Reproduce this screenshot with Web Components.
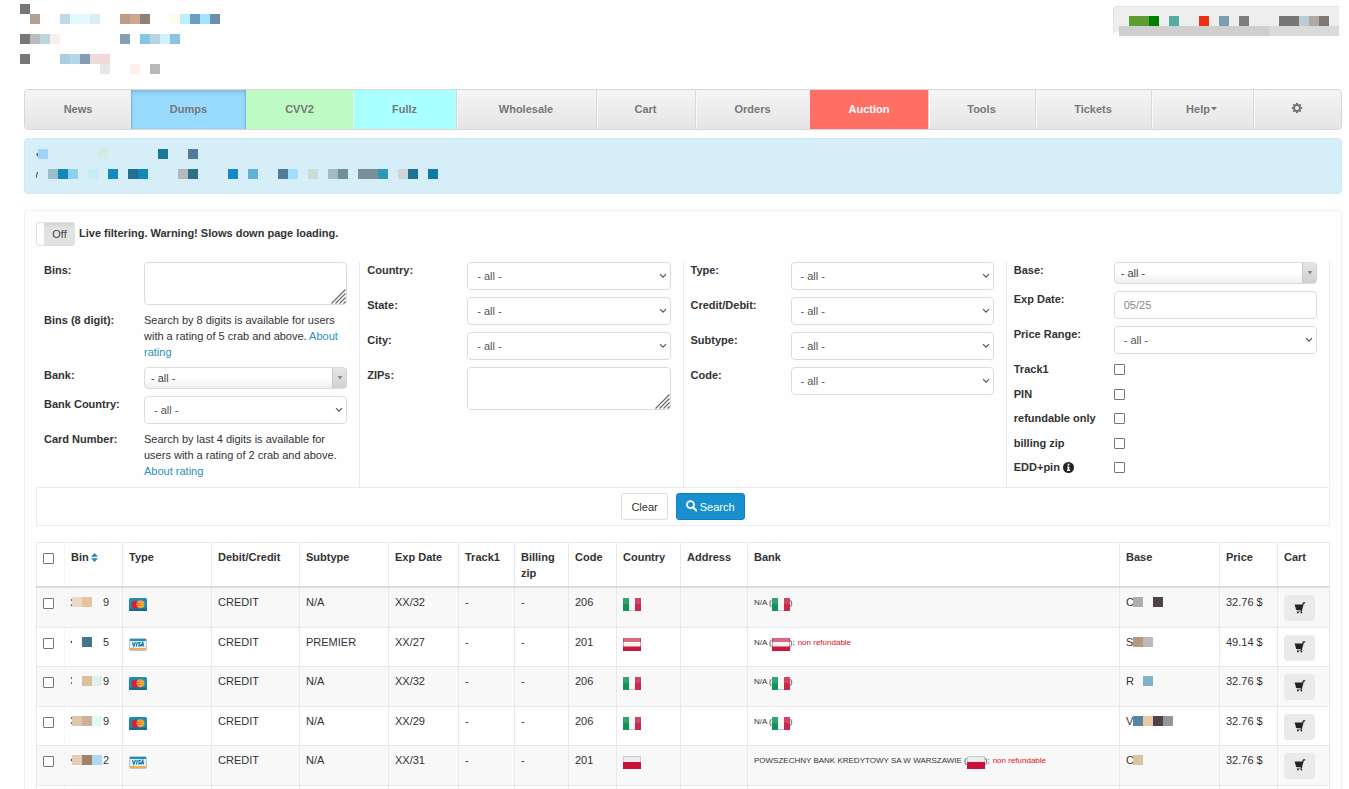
<!DOCTYPE html>
<html lang="en">
<head>
<meta charset="utf-8">
<title>Listing</title>
<style>
  html, body { margin: 0; height: 100%; }
  body { background: #fefefe; color: #333; font: 11px/16px "Liberation Sans", Arial, sans-serif; }
</style>
</head>
<body>
<app-page></app-page>

<script>
const define = (name, html, setup) => {
  const tpl = document.createElement('template');
  tpl.innerHTML = html;
  customElements.define(name, class extends HTMLElement {
    connectedCallback() {
      if (this.shadowRoot) return;
      const root = this.attachShadow({ mode: 'open' });
      root.appendChild(tpl.content.cloneNode(true));
      if (setup) setup(root, this);
    }
  });
};

/* Redaction mosaic: cells="col,row,colour ..." on a 10px grid */
define('pixel-mosaic', `
  <style>:host { display: block; line-height: 0; } svg { display: block; }</style>
  <svg aria-hidden="true" shape-rendering="crispEdges"></svg>`,
  (root, host) => {
    const cells = host.getAttribute('cells').trim().split(/\s+/).map(c => c.split(','));
    const w = Math.max(...cells.map(c => +c[0])) * 10 + 10;
    const h = Math.max(...cells.map(c => +c[1])) * 10 + 10;
    const svg = root.querySelector('svg');
    svg.setAttribute('width', w);
    svg.setAttribute('height', h);
    svg.innerHTML = cells.map(([x, y, c]) =>
      `<rect x="${x * 10}" y="${y * 10}" width="10" height="10" fill="#${c}"/>`).join('');
  });

define('site-header', `
  <style>
    :host { display: flex; justify-content: space-between; align-items: flex-start; height: 89px; padding: 0 10px 0 20px; box-sizing: border-box; }
    .logo { padding-top: 4px; }
    .status { margin-top: 6px; width: 226px; height: 30px; box-sizing: border-box; padding: 10px 0 0 16px; border-radius: 4px 0 0 4px;
      background:
        linear-gradient(90deg, #cfcfcf 150px, #dadada 150px) 6px 20px / 220px 10px no-repeat,
        linear-gradient(#fefefe, #fefefe) 0 26px / 6px 4px no-repeat,
        linear-gradient(#efefef, #ededed);
      box-shadow: inset 1px 1px 0 #e2e2e2; }
  </style>
  <pixel-mosaic class="logo" cells="0,0,777777 1,1,b3a090 4,1,bfdae7 5,1,e0fafe 6,1,e2fafe 7,1,dcecf4 10,1,bd9c86 11,1,cba88f 12,1,8c8078 15,1,fff9ee 16,1,b8f1fd 17,1,6c9cc0 18,1,a0e4ff 19,1,6c90ac
    0,3,777777 1,3,b8bcbc 2,3,bcd8dc 3,3,fbedeb 10,3,84a0b2 12,3,84c4e4 13,3,b6d4e2 14,3,d0f1fd 15,3,8cc4e0
    0,5,777777 4,5,abcde1 5,5,b0d8e8 6,5,849cb0 7,5,eddada 8,5,f3d8da 8,6,e8e7e8 11,6,fff0ea 13,6,b8baba"></pixel-mosaic>
  <div class="status">
    <pixel-mosaic cells="0,0,5c9c30 1,0,5c9c30 2,0,008000 4,0,54aca0 7,0,ee3010 9,0,7c9cb0 11,0,807c7a 15,0,777777 16,0,777777 17,0,bdccd4 18,0,b0a8a2 19,0,7c7874"></pixel-mosaic>
  </div>`);

define('nav-item', `
  <style>
    :host { display: block; min-width: 0; box-shadow: inset 1px 0 0 #dadada, inset 2px 0 0 #f8f8f8; }
    :host(:first-child) { box-shadow: none; }
    :host([tone="blue"]) { background: #99dbff; box-shadow: inset 0 2px 4px #7ab4d8, inset 1px 0 0 #7fb6d6, inset -1px 0 0 #7fb6d6; }
    :host([tone="green"]) { background: #bdfac4; box-shadow: none; }
    :host([tone="cyan"]) { background: #aaffff; box-shadow: inset 1px 0 0 #dcfbe8; }
    :host([tone="red"]) { background: #ff6f63; box-shadow: none; }
    a { display: flex; align-items: center; justify-content: center; height: 38px; padding-bottom: 1px; color: #777; font-weight: bold; text-decoration: none; }
    :host([tone="red"]) a { color: #fff; }
  </style>
  <a href="#"><slot></slot></a>`);

define('site-nav', `
  <style>
    :host { display: block; }
    nav { display: flex; border: 1px solid #d8d8d8; border-radius: 4px; overflow: hidden; background: linear-gradient(#f5f5f5, #e5e5e5); }
    svg { display: block; }
  </style>
  <nav>
    <nav-item style="flex:106">News</nav-item>
    <nav-item style="flex:115" tone="blue">Dumps</nav-item>
    <nav-item style="flex:107" tone="green">CVV2</nav-item>
    <nav-item style="flex:103" tone="cyan">Fullz</nav-item>
    <nav-item style="flex:140">Wholesale</nav-item>
    <nav-item style="flex:99">Cart</nav-item>
    <nav-item style="flex:115">Orders</nav-item>
    <nav-item style="flex:118" tone="red">Auction</nav-item>
    <nav-item style="flex:107">Tools</nav-item>
    <nav-item style="flex:116">Tickets</nav-item>
    <nav-item style="flex:102">Help<svg width="8" height="4" viewBox="0 0 8 4"><path d="M1 0h6L4 3.4z" fill="#777"/></svg></nav-item>
    <nav-item style="flex:88"><svg width="12" height="14" viewBox="0 0 12 14" role="img" aria-label="Settings"><g fill="none" stroke="#777"><circle cx="6" cy="6" r="3" stroke-width="2"/><path d="M6 .8v2M6 9.200v2M.8 6h2M9.200 6h2M2.300 2.300l1.400 1.400M8.300 8.300l1.400 1.400M2.300 9.700l1.400-1.400M8.300 3.700l1.400-1.400" stroke-width="1.900"/></g></svg></nav-item>
  </nav>`);

define('notice-bar', `
  <style>
    :host { display: flex; flex-direction: column; gap: 10px; padding: 10px 11px; height: 56px; box-sizing: border-box; border: 1px solid #cdeaf2; border-radius: 4px; background: #d5eef8; }
    div { display: flex; }
    svg { flex: none; }
    .second svg { margin-right: 10px; }
  </style>
  <div><svg width="2" height="10"><path d="M0 5l2 3V4z" fill="#555"/></svg>
    <pixel-mosaic cells="0,0,a0d3f5 6,0,d3ebe2 12,0,1c7898 15,0,507c98"></pixel-mosaic></div>
  <div class="second"><svg width="2" height="10"><path d="M0 9L1.500 3" stroke="#444"/></svg>
    <pixel-mosaic cells="0,0,9abccc 1,0,1088b8 2,0,8cd0f4 4,0,c8ecf6 6,0,1488c0 8,0,207090 9,0,1088b8 13,0,b2b9b9 14,0,2c7088 18,0,1488c8 20,0,60b0dc 23,0,507c98 24,0,a4dcfd 26,0,ccdad8 28,0,9dbcc8 29,0,6c9098 31,0,78909c 32,0,78909c 33,0,2c98b8 35,0,ced5d6 36,0,1c7490 38,0,107ca4"></pixel-mosaic></div>`);

/* One labelled filter row. kind: select | combo | area | text | check | note */
const CONTROLS = {
  select: `<span class="box"><select id="c"><option>- all -</option></select><svg class="chev" width="8" height="6" viewBox="0 0 8 6"><path d="M1 1.200l3 3 3-3" fill="none" stroke="#555" stroke-width="1.200"/></svg></span>`,
  combo: `<span class="box combo"><select id="c"><option>- all -</option></select><span class="arrow"><svg width="6" height="4" viewBox="0 0 6 4"><path d="M.5 0h5L3 3.500z" fill="#888"/></svg></span></span>`,
  area: `<span class="box"><textarea id="c"></textarea><svg class="grip" width="15" height="15" viewBox="0 0 15 15"><path d="M.5 14.500l14-14M4.500 14.500l10-10M8.500 14.500l6-6M12.500 14.500l2-2" stroke="#666" stroke-width="1.100"/></svg></span>`,
  text: `<input id="c" type="text" placeholder="05/25">`,
  check: `<input id="c" type="checkbox">`,
  note: `<span id="c"><slot></slot></span>`
};
define('filter-field', `
  <style>
    :host { display: grid; grid-template-columns: 100px minmax(0, 1fr); align-items: start; }
    label, .name { font-weight: bold; display: flex; gap: 3px; align-items: center; }
    .box { display: grid; }
    .box > * { grid-area: 1 / 1; }
    select, textarea, input[type=text] { font: inherit; color: #555; box-sizing: border-box; width: 100%; margin: 0; border: 1px solid #dcdcdc; border-radius: 4px; background: #fff; outline-offset: -1px; }
    select { appearance: none; height: 28px; padding: 0 9px 1px; }
    input[type=text] { height: 28px; padding: 0 9px 1px; }
    ::placeholder { color: #888; opacity: 1; }
    textarea { height: 43px; resize: none; padding: 4px 9px; display: block; }
    .chev { place-self: center end; margin-right: 4px; pointer-events: none; }
    .grip { place-self: end; margin: 0 1px 1px 0; pointer-events: none; }
    .combo select { height: 22px; padding: 0 6px 1px; color: #444; background: linear-gradient(#fff 50%, #eee); }
    .arrow { place-self: stretch end; width: 13px; margin: 1px 0; border-left: 1px solid #c8c8c8; border-right: 1px solid #d4d4d4; background: linear-gradient(#e6e6e6, #d0d0d0); border-radius: 0 4px 4px 0; display: grid; place-items: center; pointer-events: none; }
    input[type=checkbox] { appearance: none; width: 11px; height: 11px; margin: 3px 0 0; box-sizing: border-box; border: 1px solid #767676; border-radius: 1px; background: #fff; }
    input[type=checkbox]:checked { background: #1a8fcf; }
    :host([kind=check]) { height: 16px; }
  </style>`,
  (root, host) => {
    const kind = host.getAttribute('kind');
    const tag = kind === 'note' ? 'span class="name"' : 'label for="c"';
    const info = host.hasAttribute('info')
      ? `<svg width="11" height="11" viewBox="0 0 12 12" aria-hidden="true"><circle cx="6" cy="6" r="6" fill="#222"/><path d="M5 2h2v1.800H5zM4.300 4.900H7v3.600h.8v1.200H4.300V8.500H5V6h-.7z" fill="#fff"/></svg>` : '';
    const box = document.createElement('template');
    box.innerHTML = `<${tag}>${host.getAttribute('label')}${info}</${tag.split(' ')[0]}>${CONTROLS[kind]}`;
    root.appendChild(box.content);
  });

define('live-toggle', `
  <style>
    :host { display: flex; align-items: center; gap: 4px; }
    button { font: inherit; color: #444; width: 39px; height: 24px; padding: 0 0 0 8px; border: 1px solid #e0e0e0; border-radius: 3px;
      background: linear-gradient(90deg, #fff 7px, transparent 7px), linear-gradient(#d4d4d4, #e2e2e2 5px); }
    span { font-weight: bold; padding-bottom: 2px; }
  </style>
  <button type="button" role="switch" aria-checked="false" aria-labelledby="t">Off</button>
  <span id="t">Live filtering. Warning! Slows down page loading.</span>`);

define('filter-panel', `
  <style>
    :host { display: block; border-right: 1px solid #eee; }
    .cols { display: grid; grid-template-columns: repeat(4, minmax(0, 1fr)); height: 225px; }
    .col { display: flex; flex-direction: column; gap: 7px; padding: 0 12px 0 8px; }
    .col + .col { border-left: 1px solid #e9e9e9; padding-left: 7px; }
    .tight { gap: 7px; }
    .checks { flex: 1; display: flex; flex-direction: column; justify-content: space-between; padding-bottom: 12px; }
    .actions { display: flex; justify-content: center; align-items: center; gap: 8px; height: 37px; border: 1px solid #ebebeb; border-right: 0; }
    button { font: inherit; height: 27px; padding: 0 9px; border-radius: 3px; border: 1px solid #ddd; background: #fff; color: #333; display: flex; align-items: center; gap: 3px; }
    .go { background: #1890cf; border-color: #1580b8; color: #fff; }
    a { color: #2a8fbd; text-decoration: none; }
  </style>
  <form class="cols">
    <div class="col">
      <filter-field kind="area" label="Bins:"></filter-field>
      <filter-field kind="note" label="Bins (8 digit):">Search by 8 digits is available for users with a rating of 5 crab and above. <a href="#">About rating</a></filter-field>
      <filter-field kind="combo" label="Bank:"></filter-field>
      <filter-field kind="select" label="Bank Country:"></filter-field>
      <filter-field kind="note" label="Card Number:">Search by last 4 digits is available for users with a rating of 2 crab and above. <a href="#">About rating</a></filter-field>
    </div>
    <div class="col">
      <filter-field kind="select" label="Country:"></filter-field>
      <filter-field kind="select" label="State:"></filter-field>
      <filter-field kind="select" label="City:"></filter-field>
      <filter-field kind="area" label="ZIPs:"></filter-field>
    </div>
    <div class="col">
      <filter-field kind="select" label="Type:"></filter-field>
      <filter-field kind="select" label="Credit/Debit:"></filter-field>
      <filter-field kind="select" label="Subtype:"></filter-field>
      <filter-field kind="select" label="Code:"></filter-field>
    </div>
    <div class="col">
      <filter-field kind="combo" label="Base:"></filter-field>
      <filter-field kind="text" label="Exp Date:"></filter-field>
      <filter-field kind="select" label="Price Range:"></filter-field>
      <div class="checks">
        <filter-field kind="check" label="Track1"></filter-field>
        <filter-field kind="check" label="PIN"></filter-field>
        <filter-field kind="check" label="refundable only"></filter-field>
        <filter-field kind="check" label="billing zip"></filter-field>
        <filter-field kind="check" label="EDD+pin" info></filter-field>
      </div>
    </div>
  </form>
  <div class="actions">
    <button type="button">Clear</button>
    <button type="button" class="go"><svg width="11" height="13" viewBox="0 0 11 13" aria-hidden="true"><circle cx="4.500" cy="4.700" r="3.500" fill="none" stroke="#fff" stroke-width="1.800"/><path d="M7 7.300l3.200 3.200" stroke="#fff" stroke-width="2.200" stroke-linecap="round"/></svg>Search</button>
  </div>`);

const ICONS = {
  it: '<rect width="6" height="13" fill="#12935a"/><rect x="6" width="6" height="13" fill="#f6f6f4"/><rect x="12" width="6" height="13" fill="#c8284a"/><path d="M0 0h18v6H0z" fill="#fff" opacity=".14"/><path d="M6 12.500h6" stroke="#ccc"/>',
  at: '<rect width="18" height="13" fill="#c8193c"/><rect y="4" width="18" height="4.500" fill="#fbf0f1"/><path d="M0 0h18v6H0z" fill="#fff" opacity=".35"/><path d="M.5 0v13M17.500 0v13" stroke="#b8102f" opacity=".4"/>',
  pl: '<rect width="18" height="13" fill="#eee"/><rect y="6" width="18" height="7" fill="#c8123a"/><path d="M.5 6V.5h17V6" fill="none" stroke="#ccc"/>',
  mc: '<rect width="18" height="13" rx="1.500" fill="#1d8bb4"/><path d="M0 10.500h18V12a1 1 0 0 1-1 1H1a1 1 0 0 1-1-1z" fill="#156a92"/><circle cx="6.500" cy="6.800" r="4" fill="#d5203a"/><circle cx="11.500" cy="6.300" r="4" fill="#f0a23a"/><path d="M7.500 5.500h3M7.500 7.500h3" stroke="#c8503c" stroke-width=".8"/>',
  visa: '<rect x=".5" y=".5" width="17" height="12" rx="1.500" fill="#e2f0f5" stroke="#bcc8cc"/><rect x="1" y="1" width="16" height="2" fill="#1d8fc0"/><rect x="1" y="10" width="16" height="2" fill="#efb04c"/><path d="M3.500 4.200l1.300 4L6.500 4M8.200 4L7.400 8.500M11.800 4.500c-2.500-.6-2.600 1.200-1.200 1.700s.8 2-1.600 1.500M11.800 8.500l2-4.300.7 4.300M12.500 7.200h2" fill="none" stroke="#177aa8" stroke-width="1.200"/>'
};
define('glyph-icon', `
  <style>:host { display: inline-block; vertical-align: top; line-height: 0; } svg { display: block; }</style>
  <svg width="18" height="13" viewBox="0 0 18 13" aria-hidden="true"></svg>`,
  (root, host) => { root.querySelector('svg').innerHTML = ICONS[host.getAttribute('name')]; });

const FIVE = '<svg width="1" height="9"><path d="M0 1h1v2H0zM0 6h1v2H0z" fill="#666"/></svg>';
const FOUR = '<svg width="1" height="9"><path d="M0 4h1v2H0z" fill="#333"/></svg>';
const ROWS = [
  [FIVE, '0,0,ead8c8 1,0,e6c4a2', '9', 'mc', 'N/A', '32', '206', 'it', 'N/A', '', 'C', '0,0,b2adaa 2,0,4f4349', '32.76'],
  [FOUR, '1,0,42768f', '5', 'visa', 'PREMIER', '27', '201', 'at', 'N/A', 'non refundable', 'S', '0,0,b59880 1,0,bbbbbb', '49.14'],
  [FIVE, '1,0,dcc09e 2,0,e0f0ec', '9', 'mc', 'N/A', '32', '206', 'it', 'N/A', '', 'R', '1,0,80b2cc', '32.76'],
  [FIVE, '0,0,dcc8a8 1,0,d0b09a 2,0,ddfaf6', '9', 'mc', 'N/A', '29', '206', 'it', 'N/A', '', 'V', '0,0,5884a0 1,0,ecc8a6 2,0,4f4349 3,0,969696', '32.76'],
  [FOUR, '0,0,eaccb2 1,0,a0826a 2,0,acdaf2', '2', 'visa', 'N/A', '31', '201', 'pl', 'POWSZECHNY BANK KREDYTOWY SA W WARSZAWIE', 'non refundable', 'C', '0,0,dcc4a0', '32.76']
];
define('offers-table', `
  <style>
    :host { display: block; }
    table { width: 100%; table-layout: fixed; border-collapse: collapse; border: 1px solid #ebebeb; }
    th, td { padding: 6px 7px 5px 6px; text-align: left; vertical-align: top; border: 1px solid #e9e9e9; box-sizing: border-box; }
    th { height: 44px; border-bottom: 2px solid #dcdcdc; }
    td { height: 39px; }
    tbody tr:nth-child(odd) td { height: 40px; background: #f8f8f8; }
    td:first-child, th:first-child { border-right-color: #f6f6f6; }
    input { appearance: none; display: block; width: 11px; height: 11px; margin: 4px 0 0; box-sizing: border-box; border: 1px solid #767676; border-radius: 1px; background: #fff; }
    input:checked { background: #1a8fcf; }
    .sort { display: flex; align-items: center; gap: 2px; }
    .code, .base { display: flex; align-items: center; height: 16px; }
    .code pixel-mosaic { width: 31px; }
    .base span { width: 7px; }
    .icon { display: block; padding-top: 4px; }
    .bank { font-size: 8px; white-space: nowrap; display: flex; align-items: center; height: 18px; }
    .bank glyph-icon { padding-top: 3px; }
    .bank em { font-style: normal; color: #e01020; padding-left: 3px; }
    button { display: grid; place-items: center; width: 31px; height: 26px; margin-top: 1px; padding: 0; border: 0; border-radius: 4px; background: #eaeaea; }
  </style>
  <table>
    <colgroup>
      <col style="width:28px"><col style="width:58px"><col style="width:89px"><col style="width:88px"><col style="width:89px">
      <col style="width:70px"><col style="width:56px"><col style="width:54px"><col style="width:48px"><col style="width:64px">
      <col style="width:67px"><col><col style="width:100px"><col style="width:58px"><col style="width:52px">
    </colgroup>
    <thead><tr>
      <th><input type="checkbox" aria-label="Select all"></th>
      <th><span class="sort">Bin<svg width="7" height="9" viewBox="0 0 7 9" aria-hidden="true"><path d="M0 3.800L3.500 0 7 3.800zM0 5.200h7L3.500 9z" fill="#2a86b8"/></svg></span></th>
      <th>Type</th><th>Debit/Credit</th><th>Subtype</th><th>Exp Date</th><th>Track1</th><th>Billing zip</th>
      <th>Code</th><th>Country</th><th>Address</th><th>Bank</th><th>Base</th><th>Price</th><th>Cart</th>
    </tr></thead>
    <tbody></tbody>
  </table>`,
  root => {
    const cart = `<svg width="12" height="13" viewBox="0 0 12 13" aria-hidden="true"><path d="M.6 2.600h7.600L8.800.8q.2-.5.700-.5h1.700v1.100H9.900L8 8.200l.3.700-.5.700H2.900v-.9h3.800l.2-.6H2.200z" fill="#222"/><circle cx="3.900" cy="10.600" r=".9" fill="#222"/><circle cx="7.300" cy="10.600" r=".9" fill="#222"/></svg>`;
    root.querySelector('tbody').innerHTML = ROWS.map(([edge, cells, end, card, sub, exp, code, flag, bank, warn, base, bcells, price]) => `<tr>
      <td><input type="checkbox" aria-label="Select row"></td>
      <td><span class="code">${edge}<pixel-mosaic cells="${cells}"></pixel-mosaic>${end}</span></td>
      <td><span class="icon"><glyph-icon name="${card}"></glyph-icon></span></td>
      <td>CREDIT</td><td>${sub}</td><td>XX/${exp}</td><td>-</td><td>-</td><td>${code}</td>
      <td><span class="icon"><glyph-icon name="${flag}"></glyph-icon></span></td><td></td>
      <td><span class="bank"><span>${bank} (</span><glyph-icon name="${flag}"></glyph-icon><span>)${warn ? ';' : ''}</span>${warn ? `<em>${warn}</em>` : ''}</span></td>
      <td><span class="base"><span>${base}</span><pixel-mosaic cells="${bcells}"></pixel-mosaic></span></td>
      <td>${price} $</td>
      <td><button type="button" aria-label="Add to cart">${cart}</button></td></tr>`).join('') + `<tr>${'<td></td>'.repeat(15)}</tr>`;
  });

define('app-page', `
  <style>
    :host { display: flex; flex-direction: column; height: 100vh; overflow: hidden; }
    main { flex: 1; min-height: 0; display: flex; flex-direction: column; padding: 0 7px 0 24px; }
    site-nav, notice-bar { flex: none; }
    notice-bar { margin: 8px 0 16px; }
    section { flex: 1; min-height: 0; overflow: hidden; border: 1px solid #f0f0f0; border-bottom: 0; border-radius: 4px 4px 0 0; padding: 11px 11px 0; }
    filter-panel { margin: 16px 0; }
  </style>
  <site-header></site-header>
  <main>
    <site-nav></site-nav>
    <notice-bar></notice-bar>
    <section>
      <live-toggle></live-toggle>
      <filter-panel></filter-panel>
      <offers-table></offers-table>
    </section>
  </main>`);
</script>
</body>
</html>
